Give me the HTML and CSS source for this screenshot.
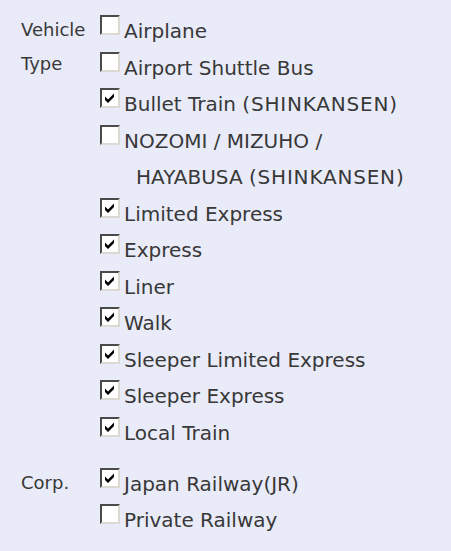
FILE: index.html
```html
<!DOCTYPE html>
<html lang="en">
<head>
    <meta charset="UTF-8">
    <meta name="viewport" content="width=device-width, initial-scale=1.0">
    <title>Search Options</title>
    <link rel="stylesheet" href="styles.css">
</head>
<body>
    <table class="options">
        <tr class="group">
            <th class="group-label">Vehicle Type</th>
            <td class="choices">
                <label class="choice"><span class="box"></span><span class="text">Airplane</span></label>
                <label class="choice"><span class="box"></span><span class="text">Airport Shuttle Bus</span></label>
                <label class="choice"><span class="box checked"></span><span class="text">Bullet Train <span class="caps">(SHINKANSEN)</span></span></label>
                <label class="choice">
                    <span class="box"></span>
                    <span class="text">
                        <span class="line">NOZOMI / MIZUHO /</span>
                        <span class="line indent">HAYABUSA <span class="caps">(SHINKANSEN)</span></span>
                    </span>
                </label>
                <label class="choice"><span class="box checked"></span><span class="text">Limited Express</span></label>
                <label class="choice"><span class="box checked"></span><span class="text">Express</span></label>
                <label class="choice"><span class="box checked"></span><span class="text">Liner</span></label>
                <label class="choice"><span class="box checked"></span><span class="text">Walk</span></label>
                <label class="choice"><span class="box checked"></span><span class="text">Sleeper Limited Express</span></label>
                <label class="choice"><span class="box checked"></span><span class="text">Sleeper Express</span></label>
                <label class="choice"><span class="box checked"></span><span class="text">Local Train</span></label>
            </td>
        </tr>
        <tr class="group">
            <th class="group-label">Corp.</th>
            <td class="choices">
                <label class="choice"><span class="box checked"></span><span class="text">Japan Railway(JR)</span></label>
                <label class="choice"><span class="box"></span><span class="text">Private Railway</span></label>
            </td>
        </tr>
    </table>
</body>
</html>
```

FILE: styles.css
```css
* {
    margin: 0;
    padding: 0;
    box-sizing: border-box;
}
body {
    background-color: #e9ebf8;
    color: #383838;
    font-family: "DejaVu Sans", sans-serif;
    padding: 13px 0 0 21px;
}
.options {
    border-collapse: collapse;
}
.group + .group .group-label,
.group + .group .choices {
    padding-top: 14.5px;
}
.group-label {
    width: 79px;
    text-align: left;
    vertical-align: top;
    font-weight: normal;
    font-size: 18px;
    line-height: 34px;
}
.choices {
    vertical-align: top;
    width: 324px;
}
.choice {
    display: flex;
    align-items: flex-start;
    font-size: 20px;
    line-height: 36.5px;
}
.box {
    flex: none;
    width: 20px;
    height: 20px;
    margin-top: 2px;
    margin-right: 4px;
    background-color: #fff;
    border-top: 2px solid #4a4a4a;
    border-left: 2px solid #4a4a4a;
    border-right: 2px solid #dcd9d2;
    border-bottom: 2px solid #dcd9d2;
}
.box.checked {
    background: #fff url("data:image/svg+xml,%3Csvg xmlns='http://www.w3.org/2000/svg' width='16' height='16'%3E%3Cpolygon points='3,6.5 6,9.5 12,3.5 12,7 6,13 3,10' fill='%23000'/%3E%3C/svg%3E") no-repeat center;
}
.caps {
    letter-spacing: 0.8px;
}
.line {
    display: block;
}
.indent {
    padding-left: 12px;
}
```
